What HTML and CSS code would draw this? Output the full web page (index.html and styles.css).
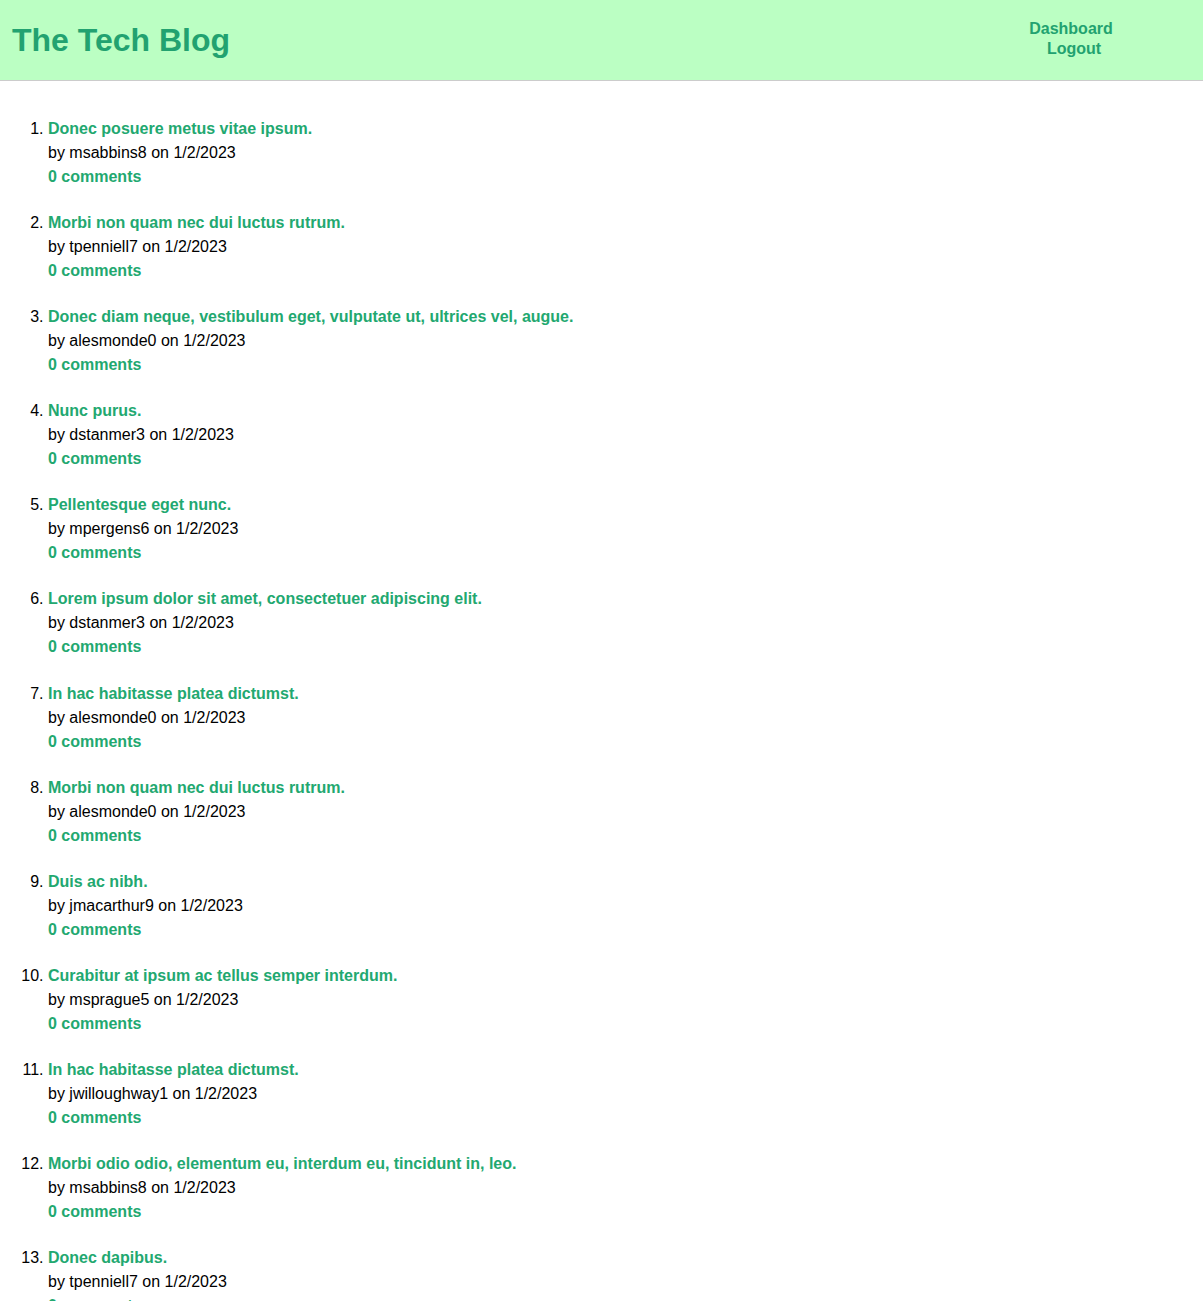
FILE: index.html
```html
<!DOCTYPE html>
<html lang="en">
<head>
<meta charset="utf-8">
<title>The Tech Blog</title>
<link rel="stylesheet" href="styles.css">
</head>
<body>
<header class="site-header">
  <h1 class="site-title">The Tech Blog</h1>
  <nav class="site-nav">
    <a class="nav-link" href="#">Dashboard</a>
    <a class="nav-link nav-logout" href="#">Logout</a>
  </nav>
</header>
<main class="content">
  <ol class="posts">
    <li class="post"><a class="post-title" href="#">Donec posuere metus vitae ipsum.</a><div class="byline">by msabbins8 on 1/2/2023</div><a class="comments" href="#">0 comments</a></li>
    <li class="post"><a class="post-title" href="#">Morbi non quam nec dui luctus rutrum.</a><div class="byline">by tpenniell7 on 1/2/2023</div><a class="comments" href="#">0 comments</a></li>
    <li class="post"><a class="post-title" href="#">Donec diam neque, vestibulum eget, vulputate ut, ultrices vel, augue.</a><div class="byline">by alesmonde0 on 1/2/2023</div><a class="comments" href="#">0 comments</a></li>
    <li class="post"><a class="post-title" href="#">Nunc purus.</a><div class="byline">by dstanmer3 on 1/2/2023</div><a class="comments" href="#">0 comments</a></li>
    <li class="post"><a class="post-title" href="#">Pellentesque eget nunc.</a><div class="byline">by mpergens6 on 1/2/2023</div><a class="comments" href="#">0 comments</a></li>
    <li class="post"><a class="post-title" href="#">Lorem ipsum dolor sit amet, consectetuer adipiscing elit.</a><div class="byline">by dstanmer3 on 1/2/2023</div><a class="comments" href="#">0 comments</a></li>
    <li class="post"><a class="post-title" href="#">In hac habitasse platea dictumst.</a><div class="byline">by alesmonde0 on 1/2/2023</div><a class="comments" href="#">0 comments</a></li>
    <li class="post"><a class="post-title" href="#">Morbi non quam nec dui luctus rutrum.</a><div class="byline">by alesmonde0 on 1/2/2023</div><a class="comments" href="#">0 comments</a></li>
    <li class="post"><a class="post-title" href="#">Duis ac nibh.</a><div class="byline">by jmacarthur9 on 1/2/2023</div><a class="comments" href="#">0 comments</a></li>
    <li class="post"><a class="post-title" href="#">Curabitur at ipsum ac tellus semper interdum.</a><div class="byline">by msprague5 on 1/2/2023</div><a class="comments" href="#">0 comments</a></li>
    <li class="post"><a class="post-title" href="#">In hac habitasse platea dictumst.</a><div class="byline">by jwilloughway1 on 1/2/2023</div><a class="comments" href="#">0 comments</a></li>
    <li class="post"><a class="post-title" href="#">Morbi odio odio, elementum eu, interdum eu, tincidunt in, leo.</a><div class="byline">by msabbins8 on 1/2/2023</div><a class="comments" href="#">0 comments</a></li>
    <li class="post"><a class="post-title" href="#">Donec dapibus.</a><div class="byline">by tpenniell7 on 1/2/2023</div><a class="comments" href="#">0 comments</a></li>
    <li class="post"><a class="post-title" href="#">Nunc purus.</a><div class="byline">by jmacarthur9 on 1/2/2023</div><a class="comments" href="#">0 comments</a></li>
  </ol>
</main>
</body>
</html>
```
FILE: styles.css
```css
html, body {
  margin: 0;
  padding: 0;
  background: #ffffff;
  font-family: "Liberation Sans", Arial, Helvetica, sans-serif;
  font-size: 16px;
  color: #000;
}

.site-header {
  display: flex;
  justify-content: space-between;
  align-items: center;
  height: 80px;
  background: #bbffc3;
  border-bottom: 1px solid #cccccc;
  padding: 0 0 0 12px;
}

.site-title {
  margin: 0;
  font-size: 32px;
  font-weight: bold;
  color: #22a270;
}

.site-nav {
  display: flex;
  flex-direction: column;
  align-items: center;
  width: 150px;
  margin-right: 57px;
  margin-top: 2px;
  margin-bottom: 4px;
}

.nav-link {
  color: #22a270;
  font-weight: bold;
  text-decoration: none;
  line-height: 20px;
}

.nav-logout {
  margin-left: 6px;
}

.content {
  padding: 36px 8px 0;
}

.posts {
  margin: 0;
  padding-left: 40px;
}

.post {
  line-height: 24px;
  margin-bottom: 22.1px;
}

.post-title,
.comments {
  display: block;
  color: #22a870;
  font-weight: bold;
  text-decoration: none;
}

.byline {
  color: #000;
}
```
